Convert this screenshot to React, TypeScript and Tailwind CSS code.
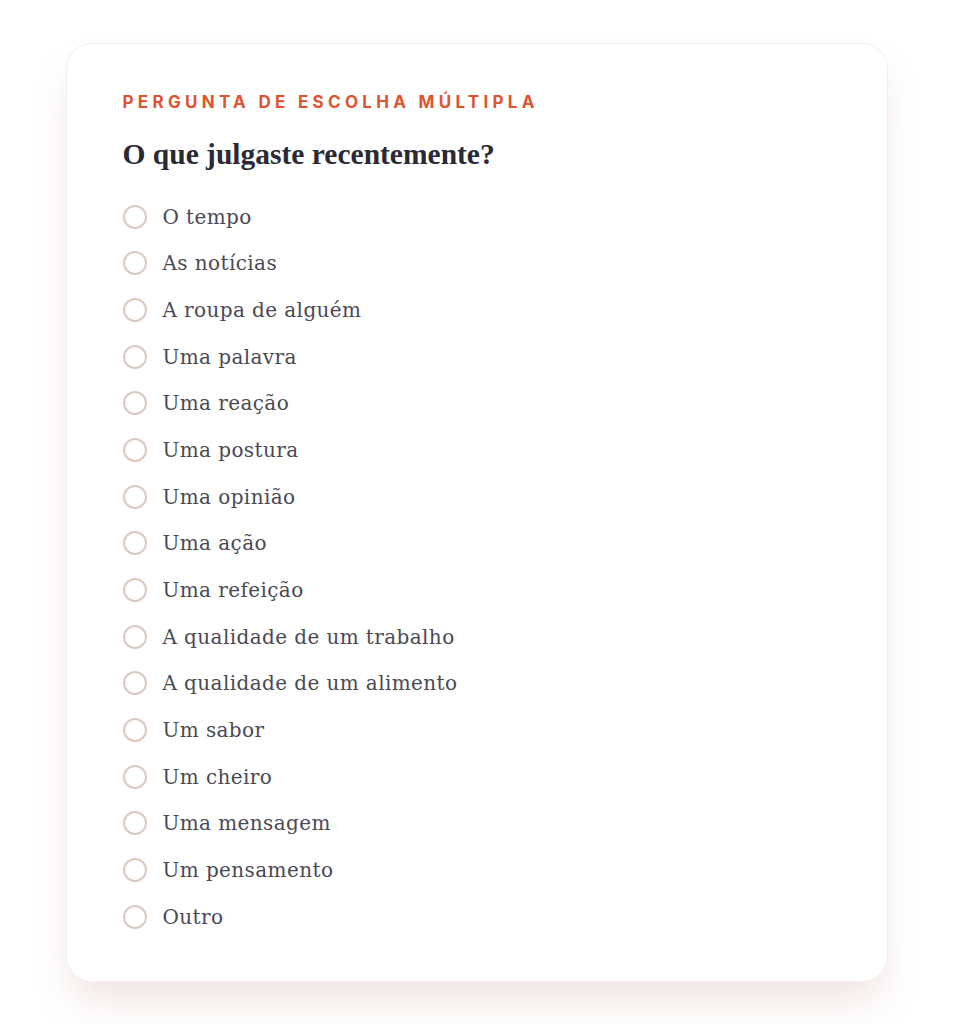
const options = [
  'O tempo',
  'As notícias',
  'A roupa de alguém',
  'Uma palavra',
  'Uma reação',
  'Uma postura',
  'Uma opinião',
  'Uma ação',
  'Uma refeição',
  'A qualidade de um trabalho',
  'A qualidade de um alimento',
  'Um sabor',
  'Um cheiro',
  'Uma mensagem',
  'Um pensamento',
  'Outro',
];

export default function App() {
  return (
    <div className="min-h-screen bg-white pt-[43px] pb-[44px]">
      <div className="mx-auto w-[822px] rounded-[26px] border border-[#f5f0ee] bg-white px-[56px] pt-[50px] pb-[41px] shadow-[0_24px_40px_-8px_rgba(190,140,130,0.26)]">
        <p className="font-['Inter',sans-serif] text-[17px] font-bold uppercase leading-none tracking-[0.253em] text-[#e0532f]">
          Pergunta de escolha múltipla
        </p>
        <h2 className="mt-[29px] font-['Liberation_Serif',serif] text-[29.5px] font-bold leading-none text-[#2a2a34]">
          O que julgaste recentemente?
        </h2>
        <ul className="mt-[24px] flex flex-col">
          {options.map((opt) => (
            <li key={opt} className="flex h-[46.67px] items-center gap-[16px]">
              <span className="h-[24px] w-[24px] shrink-0 rounded-full border-2 border-[#dcc8c1]" />
              <span className="font-['DejaVu_Serif',serif] text-[20px] tracking-[0.02em] text-[#4a4954]">{opt}</span>
            </li>
          ))}
        </ul>
      </div>
    </div>
  );
}
